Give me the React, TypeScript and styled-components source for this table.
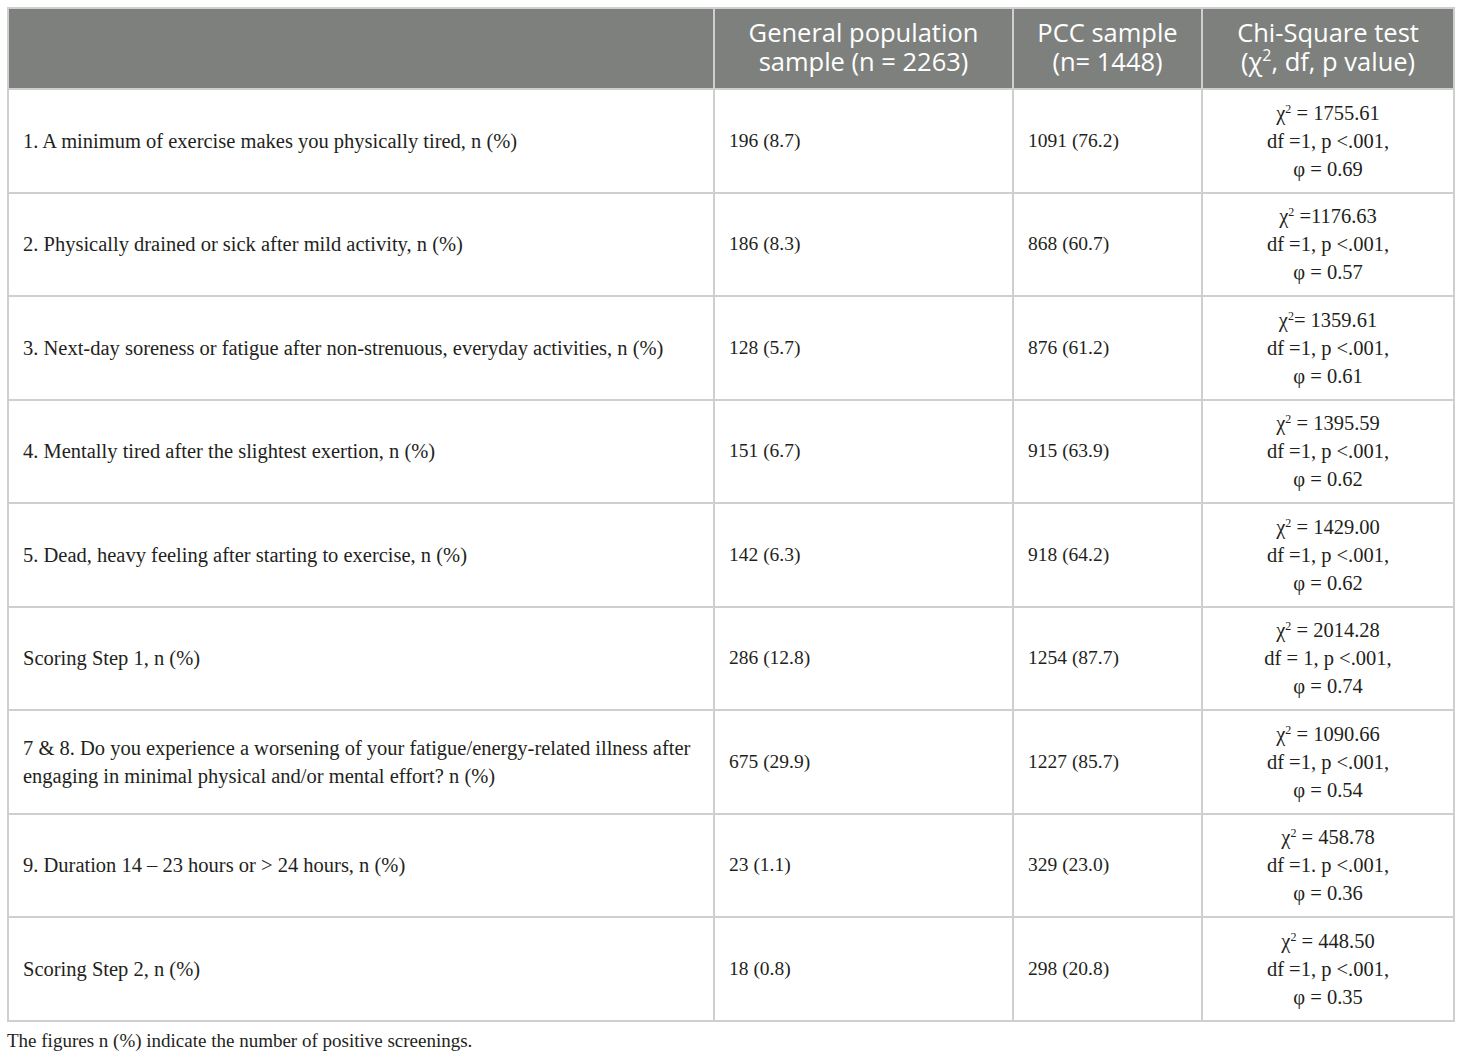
import React from "react";
import styled, { createGlobalStyle } from "styled-components";

const Global = createGlobalStyle`
  html, body { margin: 0; padding: 0; background: #ffffff; }
  body { font-family: "Liberation Serif", "Times New Roman", serif; color: #231f20; }
`;

const Page = styled.div`
  padding: 7px 7px 0 7px;
`;

const Table = styled.table`
  width: 1446px;
  border-collapse: collapse;
  table-layout: fixed;
  border: 2px solid #cfcfcf;
`;

const HeadCell = styled.th`
  background: #7e807d;
  color: #ffffff;
  font-family: "Open Sans", "Noto Sans", sans-serif;
  font-weight: 400;
  font-size: 25.5px;
  line-height: 29px;
  height: 81px;
  padding: 0 4px 4px 4px;
  text-align: center;
  vertical-align: middle;
  border: 2px solid #cfcfcf;
  box-sizing: border-box;
  white-space: nowrap;
`;

const HeadLine = styled.span`
  display: block;
`;

const Row = styled.tr`
  height: 103.5px;
`;

const Cell = styled.td<{ $center?: boolean; $size?: number }>`
  font-family: "Liberation Serif", "Times New Roman", serif;
  font-size: ${(p) => p.$size ?? 20.5}px;
  line-height: 28px;
  color: #231f20;
  padding: 0 14px;
  text-align: ${(p) => (p.$center ? "center" : "left")};
  vertical-align: middle;
  border: 2px solid #cfcfcf;
`;

const Sup = styled.sup`
  font-size: 12px;
  line-height: 0;
  vertical-align: 7px;
`;

const HeadSup = styled.sup`
  font-size: 16px;
  line-height: 0;
  vertical-align: 10px;
`;

const Note = styled.p`
  margin: 8px 0 0 0;
  font-family: "Liberation Serif", "Times New Roman", serif;
  font-size: 19px;
  color: #231f20;
`;

type R = { label: string; gen: string; pcc: string; chi: string; df: string; phi: string };

const rows: R[] = [
  { label: "1. A minimum of exercise makes you physically tired, n (%)", gen: "196 (8.7)", pcc: "1091 (76.2)", chi: " = 1755.61", df: "df =1, p <.001,", phi: "φ = 0.69" },
  { label: "2. Physically drained or sick after mild activity, n (%)", gen: "186 (8.3)", pcc: "868 (60.7)", chi: " =1176.63", df: "df =1, p <.001,", phi: "φ = 0.57" },
  { label: "3. Next-day soreness or fatigue after non-strenuous, everyday activities, n (%)", gen: "128 (5.7)", pcc: "876 (61.2)", chi: "= 1359.61", df: "df =1, p <.001,", phi: "φ = 0.61" },
  { label: "4. Mentally tired after the slightest exertion, n (%)", gen: "151 (6.7)", pcc: "915 (63.9)", chi: " = 1395.59", df: "df =1, p <.001,", phi: "φ = 0.62" },
  { label: "5. Dead, heavy feeling after starting to exercise, n (%)", gen: "142 (6.3)", pcc: "918 (64.2)", chi: " = 1429.00", df: "df =1, p <.001,", phi: "φ = 0.62" },
  { label: "Scoring Step 1, n (%)", gen: "286 (12.8)", pcc: "1254 (87.7)", chi: " = 2014.28", df: "df = 1, p <.001,", phi: "φ = 0.74" },
  { label: "7 & 8. Do you experience a worsening of your fatigue/energy-related illness after engaging in minimal physical and/or mental effort? n (%)", gen: "675 (29.9)", pcc: "1227 (85.7)", chi: " = 1090.66", df: "df =1, p <.001,", phi: "φ = 0.54" },
  { label: "9. Duration 14 – 23 hours or > 24 hours, n (%)", gen: "23 (1.1)", pcc: "329 (23.0)", chi: " = 458.78", df: "df =1. p <.001,", phi: "φ = 0.36" },
  { label: "Scoring Step 2, n (%)", gen: "18 (0.8)", pcc: "298 (20.8)", chi: " = 448.50", df: "df =1, p <.001,", phi: "φ = 0.35" },
];

export default function App() {
  return (
    <Page>
      <Global />
      <Table>
        <colgroup>
          <col style={{ width: 706 }} />
          <col style={{ width: 299 }} />
          <col style={{ width: 189 }} />
          <col style={{ width: 252 }} />
        </colgroup>
        <thead>
          <tr>
            <HeadCell />
            <HeadCell>
              <HeadLine>General population</HeadLine>
              <HeadLine>sample (n = 2263)</HeadLine>
            </HeadCell>
            <HeadCell>
              <HeadLine>PCC sample</HeadLine>
              <HeadLine>(n= 1448)</HeadLine>
            </HeadCell>
            <HeadCell>
              <HeadLine>Chi-Square test</HeadLine>
              <HeadLine>
                (χ<HeadSup>2</HeadSup>, df, p value)
              </HeadLine>
            </HeadCell>
          </tr>
        </thead>
        <tbody>
          {rows.map((r) => (
            <Row key={r.label}>
              <Cell>{r.label}</Cell>
              <Cell $size={19.5}>{r.gen}</Cell>
              <Cell $size={19.5}>{r.pcc}</Cell>
              <Cell $center>
                χ<Sup>2</Sup>
                {r.chi}
                <br />
                {r.df}
                <br />
                {r.phi}
              </Cell>
            </Row>
          ))}
        </tbody>
      </Table>
      <Note>The figures n (%) indicate the number of positive screenings.</Note>
    </Page>
  );
}
